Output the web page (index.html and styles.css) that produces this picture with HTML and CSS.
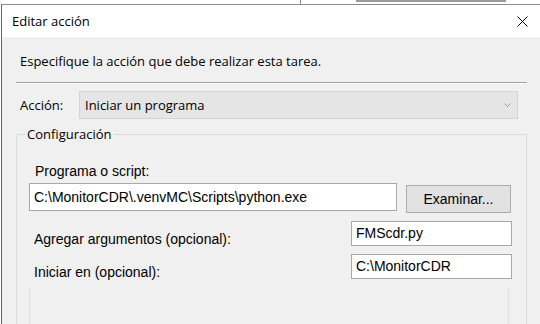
FILE: index.html
```html
<!DOCTYPE html>
<html lang="es">
<head>
<meta charset="utf-8">
<title>Editar acción</title>
<link rel="stylesheet" href="styles.css">
</head>
<body>
<div class="backdrop">
  <span class="bd-line"></span>
  <span class="bd-text"></span>
</div>
<div class="window">
  <div class="titlebar">
    <span class="title">Editar acción</span>
    <svg class="close" width="11" height="11" viewBox="0 0 11 11"><path d="M0.5 0.5 L10.5 10.5 M10.5 0.5 L0.5 10.5" stroke="#000" stroke-width="1" fill="none"/></svg>
  </div>
  <div class="client">
    <p class="instr">Especifique la acción que debe realizar esta tarea.</p>
    <div class="sep"></div>
    <div class="action-row">
      <span class="action-label">Acción:</span>
      <div class="combo">
        <span>Iniciar un programa</span>
        <svg class="chev" width="7" height="4" viewBox="0 0 7 4"><path d="M0.5 0.5 L3.5 3.5 L6.5 0.5" stroke="#9a9a9a" stroke-width="1" fill="none"/></svg>
      </div>
    </div>
    <fieldset class="group">
      <legend>Configuración</legend>
      <div class="group-body">
        <div class="field-label">Programa o script:</div>
        <div class="prog-row">
          <div class="input wide">C:\MonitorCDR\.venvMC\Scripts\python.exe</div>
          <div class="btn">Examinar...</div>
        </div>
        <div class="opt-row">
          <span class="opt-label">Agregar argumentos (opcional):</span>
          <div class="input small">FMScdr.py</div>
        </div>
        <div class="opt-row">
          <span class="opt-label">Iniciar en (opcional):</span>
          <div class="input small">C:\MonitorCDR</div>
        </div>
        <div class="sub-panel"></div>
      </div>
    </fieldset>
  </div>
</div>
</body>
</html>
```
FILE: styles.css
```css
html, body {
  margin: 0;
  padding: 0;
}
body {
  width: 540px;
  height: 324px;
  overflow: hidden;
  background: #ffffff;
  font-family: "Open Sans", "Noto Sans", sans-serif;
  color: #000;
}
.backdrop {
  height: 4px;
  display: flex;
  align-items: flex-start;
}
.bd-line {
  margin-left: 300px;
  width: 1px;
  height: 4px;
  background: #8a8a8a;
}
.bd-text {
  margin-left: 55px;
  width: 150px;
  height: 2px;
  background: #9a9a9a;
}
.window {
  margin-left: 1px;
  width: 538px;
  border-left: 1px solid #666;
  border-top: 1px solid #8c8c8c;
}
.titlebar {
  height: 32px;
  background: #fff;
  display: flex;
  align-items: center;
  justify-content: space-between;
}
.title {
  margin-left: 10px;
  font-size: 13px;
  line-height: 16px;
}
.close {
  margin-right: 12px;
  display: block;
}
.client {
  background: #f0f0f0;
  padding: 0 13px 0 14px;
  height: 287px;
  overflow: hidden;
}
.instr {
  margin: 16px 0 0 4px;
  font-size: 13px;
  line-height: 16px;
}
.sep {
  margin-top: 13px;
  border-top: 1px solid #a0a0a0;
  border-bottom: 1px solid #ffffff;
}
.action-row {
  display: flex;
  align-items: center;
  margin-top: 7px;
}
.action-label {
  width: 63px;
  padding-left: 4px;
  box-sizing: border-box;
  font-size: 13px;
  line-height: 16px;
}
.combo {
  width: 439px;
  height: 28px;
  box-sizing: border-box;
  background: #e5e5e5;
  border: 1px solid #d4d4d4;
  display: flex;
  align-items: center;
  justify-content: space-between;
  padding: 0 6px 0 5px;
  font-size: 13px;
}
.chev {
  display: block;
}
.group {
  margin: 8px 0 0 0;
  padding: 0;
  border: 1px solid #dcdcdc;
  min-width: 0;
  height: 200px;
}
.group legend {
  margin-left: 8px;
  padding: 0 2px;
  font-size: 13px;
  line-height: 14px;
}
.group-body {
  padding-left: 12px;
}
.field-label {
  margin: 23px 0 0 6px;
  font-family: "Liberation Sans", Arial, sans-serif;
  font-size: 14px;
  line-height: 15px;
}
.prog-row {
  display: flex;
  align-items: flex-start;
  margin-top: 4px;
}
.input {
  box-sizing: border-box;
  background: #fff;
  border: 1px solid #a8a8a8;
  font-family: "Liberation Sans", Arial, sans-serif;
  font-size: 14px;
  line-height: 15px;
  padding: 0 4px;
  display: flex;
  align-items: center;
}
.input.wide {
  width: 368px;
  height: 28px;
}
.btn {
  margin: 2px 0 0 9px;
  width: 105px;
  height: 28px;
  box-sizing: border-box;
  background: #e1e1e1;
  border: 1px solid #adadad;
  font-family: "Liberation Sans", Arial, sans-serif;
  font-size: 14px;
  display: flex;
  align-items: center;
  justify-content: center;
}
.opt-row {
  display: flex;
  align-items: flex-start;
  justify-content: space-between;
  margin-top: 8px;
  padding-right: 14px;
}
.opt-row + .opt-row {
  margin-top: 7px;
}
.opt-label {
  margin: 11px 0 0 5px;
  font-family: "Liberation Sans", Arial, sans-serif;
  font-size: 14px;
  line-height: 15px;
}
.input.small {
  width: 161px;
  height: 25px;
}
.sub-panel {
  margin-top: 7px;
  width: 480px;
  height: 60px;
  box-sizing: border-box;
  border-left: 1px solid #e0e0e0;
  border-right: 1px solid #e0e0e0;
}
```
